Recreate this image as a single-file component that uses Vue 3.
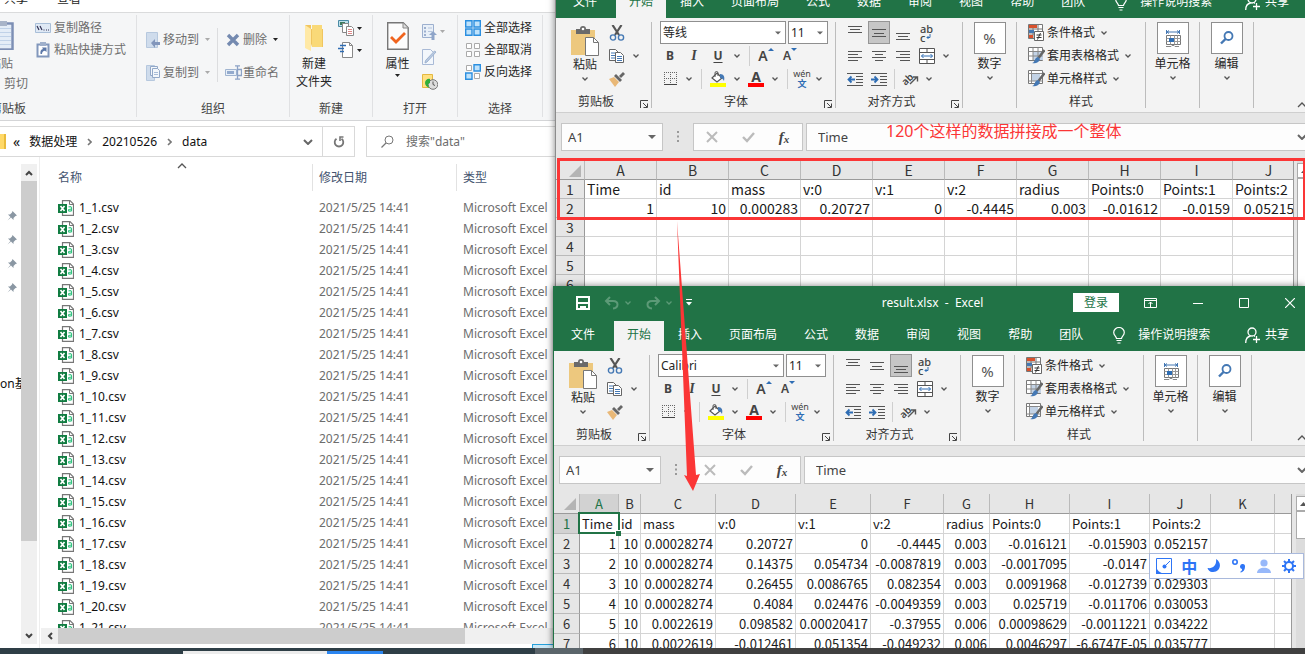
<script setup>
import { h } from 'vue'

// Icon artwork: [width, height, markup]
const art = {
  chev: [6, 4, '<path d="M.5.5 3 3 5.5.5" fill="none" stroke="#555" stroke-width="1.3"/>'],
  chevBig: [10, 6, '<path d="M1 1 5 5 9 1" fill="none" stroke="#666" stroke-width="2"/>'],
  chevUp: [10, 6, '<path d="M1 5 5 1 9 5" fill="none" stroke="#555" stroke-width="1.3"/>'],
  scrollUp: [8, 6, '<path d="M1 5 4 2 7 5" fill="none" stroke="#444" stroke-width="2"/>'],
  scrollDown: [8, 6, '<path d="M1 1 4 4 7 1" fill="none" stroke="#444" stroke-width="2"/>'],
  scrollLeft: [6, 8, '<path d="M5 1 2 4 5 7" fill="none" stroke="#444" stroke-width="2"/>'],
  crumb: [5, 8, '<path d="M1 1 4 4 1 7" fill="none" stroke="#777" stroke-width="1.6"/>'],
  tri: [5, 3, '<path d="M0 0h5L2.500 3z" fill="#222"/>'],
  triOff: [5, 3, '<path d="M0 0h5L2.500 3z" fill="#aaa"/>'],
  triBig: [8, 4, '<path d="M0 0h8L4 4z" fill="#666"/>'],
  triUp: [7, 4, '<path d="M0 4h7L3.500 0z" fill="#555"/>'],
  launch: [8, 8, '<path d="M.5 8V.5H8M3 3l4 4M7.500 3.500v4h-4" fill="none" stroke="#444"/>'],
  paste: [30, 30, '<path d="M1 4h24v25H1z" fill="#edc87e"/><path d="M6 3h4a3 3 0 0 1 6 0h4v5H6z" fill="#6a6a6a"/><circle cx="13" cy="3" r="1.300" fill="#fff"/><path d="M15.500 11.500h8l5 5v13h-13z" fill="#fff" stroke="#777"/><path d="M23.500 11.500v5h5" fill="none" stroke="#777"/>'],
  cut: [16, 16, '<path d="M3.500 0 10 10M12.500 0 6 10" stroke="#555" stroke-width="2.200" fill="none"/><circle cx="4" cy="12.500" r="2.600" fill="none" stroke="#4478b4" stroke-width="1.400"/><circle cx="12" cy="12.500" r="2.600" fill="none" stroke="#4478b4" stroke-width="1.400"/>'],
  copy: [16, 16, '<path d="M.5 1.500h6l3 3v8h-9z" fill="#fff" stroke="#666"/><path d="M2 5h4M2 7.500h4M2 10h4" stroke="#4478b4"/><path d="M6.500 4.500h5l3 3v7h-8z" fill="#fff" stroke="#666"/><path d="M8 8.500h5M8 10.500h5M8 12.500h5" stroke="#4478b4"/>'],
  brush: [18, 16, '<path d="m1 8 5-2 5 5-4 5z" fill="#e9b877"/><path d="m6 5 2-2 6 6-2 2z" fill="#666"/><path d="m11 5 4-4 2 2-4 4z" fill="#666"/>'],
  border: [13, 13, '<path d="M0 .5h13M0 6.500h13M.5 0v13M6.500 0v13M12.500 0v13" stroke="#666" stroke-dasharray="1 1" fill="none"/><path d="M0 12.500h13" stroke="#444"/>'],
  fill: [18, 16, '<path d="m8 2 5 5-5 4-5-4z" fill="#fff" stroke="#555" stroke-width="1.200"/><path d="M6 6V2a1.500 1.500 0 0 1 3 0v3" fill="none" stroke="#555"/><path d="M11 3c4 0 5 3 4 7-1-2-2-3-4-3z" fill="#4478b4"/><path d="M1 12h16v4H1z" fill="#ffff00"/>'],
  l1: [16, 16, '<path d="M1 1.500h14M3 4.500h10M1 7.500h14" stroke="#555"/>'],
  l2: [16, 16, '<path d="M1 4.500h14M3 8.500h10M1 11.500h14" stroke="#555"/>'],
  l3: [16, 16, '<path d="M1 8.500h14M3 11.500h10M1 14.500h14" stroke="#555"/>'],
  al: [16, 16, '<path d="M1 3.500h14M1 6.500h10M1 9.500h14M1 12.500h10" stroke="#555"/>'],
  ac: [16, 16, '<path d="M1 3.500h14M4 6.500h8M1 9.500h14M4 12.500h8" stroke="#555"/>'],
  ar: [16, 16, '<path d="M1 3.500h14M5 6.500h10M1 9.500h14M5 12.500h10" stroke="#555"/>'],
  out: [16, 16, '<path d="M0 2.500h16M9 5.500h7M9 8.500h7M9 11.500h7M0 14.500h16" stroke="#555"/><path d="M8 8.500H2M4.500 5.500l-3 3 3 3" stroke="#2e6db4" stroke-width="1.800" fill="none"/>'],
  ind: [16, 16, '<path d="M0 2.500h16M9 5.500h7M9 8.500h7M9 11.500h7M0 14.500h16" stroke="#555"/><path d="M0 8.500h6M3.500 5.500l3 3-3 3" stroke="#2e6db4" stroke-width="1.800" fill="none"/>'],
  merge: [16, 16, '<path d="M.5.5h15v15H.5zM.5 4.500h15M.5 11.500h15M8 .5v4M8 11.500v4" fill="#fff" stroke="#555"/><path d="M2.500 8h11M4.500 6l-2 2 2 2M11.500 6l2 2-2 2" stroke="#2e6db4" fill="none"/>'],
  arrowNE: [10, 12, '<path d="m1 11 7-7M4 4h4.500v4.500" stroke="#555" stroke-width="1.400" fill="none"/>'],
  ret: [5, 6, '<path d="M4 0v3.500H1M2.500 2 1 3.500 2.500 5" stroke="#2e6db4" fill="none"/>'],
  cond: [17, 17, '<path d="M.5.5h14v14H.5zM.5 5h14M.5 10h14M5 .5v14M10 .5v14" fill="#fff" stroke="#777"/><path d="M1 1h8v3H1z" fill="#d9512c"/><path d="M1 6h5v3H1z" fill="#4478b4"/><path d="M1 11h4v3H1z" fill="#d9512c"/><path d="M6.500 7.500h9v9h-9z" fill="#fff" stroke="#666"/><path d="M8.500 11h5M8.500 13.500h5M12.500 9l-3 6.500" stroke="#333" fill="none"/>'],
  tbl: [17, 17, '<path d="M.5.5h14v13H.5z" fill="#fff" stroke="#777"/><path d="M5 4h10v9H5z" fill="#c3d3e6"/><path d="M.5 4.500h14M.5 9h14M5 .5v13M10 .5v13" stroke="#888" fill="none"/><path d="m16.500 3-6 8" stroke="#666" stroke-width="2.500"/><path d="M4 16c3 0 2-5 6-6l2 2c-1 4-5 5-8 4z" fill="#4478b4"/>'],
  sty: [17, 17, '<path d="M.5.5h14v13H.5z" fill="#fff" stroke="#777"/><path d="M3 3h9v8H3z" fill="#c3d3e6"/><path d="M.5 3.500h14M.5 11h14M3.500 .5v13" stroke="#888" fill="none"/><path d="m16.500 3-6 8" stroke="#666" stroke-width="2.500"/><path d="M4 16c3 0 2-5 6-6l2 2c-1 4-5 5-8 4z" fill="#4478b4"/>'],
  cells: [16, 17, '<path d="M1.500 0v4M14.500 0v4M2 2h12" stroke="#4478b4" fill="none"/><path d="m4 .5-2 1.500 2 1.500M12 .5l2 1.500-2 1.500" stroke="#4478b4" fill="none"/><path d="M1.500 5.500h14v9h-14z" fill="#fff" stroke="#777"/><path d="M1.500 8.500h14M1.500 11.500h14M5.500 5.500v9M9.500 5.500v9M12.500 5.500v9" stroke="#999" fill="none"/><path d="M4 8h5v4H4z" fill="#2e6db4"/><path d="M1 16.500h5l1-1h2l1 1h4" stroke="#888" fill="none"/>'],
  find: [14, 14, '<circle cx="8.500" cy="5" r="4" fill="none" stroke="#4478b4" stroke-width="1.800"/><path d="M5.500 8 1 12.500" stroke="#4478b4" stroke-width="2.400"/>'],
  no: [12, 12, '<path d="m1 1 10 10M11 1 1 11" stroke="#bbb" stroke-width="2"/>'],
  yes: [13, 12, '<path d="m1 6 4 4 7-8" fill="none" stroke="#bbb" stroke-width="2.400"/>'],
  dots: [2, 12, '<path d="M0 1h2M0 5.500h2M0 10h2" stroke="#999" stroke-width="2"/>'],
  corner: [12, 12, '<path d="M12 0v12H0z" fill="#b4b4b4"/>'],
  save: [14, 14, '<path d="M1 1h12v12H1z" fill="none" stroke="#fff" stroke-width="2"/><path d="M1 7h12" stroke="#fff" stroke-width="2"/><path d="M4 10h6v4H8v-2H6v2H4z" fill="#fff"/>'],
  undo: [16, 14, '<path d="M6 1 2 5l4 4M2 5h7c6 0 6 7 0 7.500" fill="none" stroke="#5c9a77" stroke-width="2"/>'],
  redo: [16, 14, '<path d="m10 1 4 4-4 4M14 5H7C1 5 1 12 7 12.500" fill="none" stroke="#5c9a77" stroke-width="2"/>'],
  chevDim: [6, 4, '<path d="M.5.5 3 3 5.500.5" fill="none" stroke="#5c9a77" stroke-width="1.300"/>'],
  custom: [6, 7, '<path d="M0 .500h6" stroke="#fff"/><path d="M0 3h6L3 6.500z" fill="#fff"/>'],
  display: [13, 10, '<path d="M.5.5h12v9H.5zM.5 2.500h12M6.500 9V4M4.500 6l2-2 2 2" stroke="#fff" fill="none"/>'],
  min: [10, 10, '<path d="M0 5.500h10" stroke="#fff"/>'],
  max: [10, 10, '<path d="M.5.5h9v9h-9z" stroke="#fff" fill="none"/>'],
  close: [10, 10, '<path d="m0 0 10 10M10 0 0 10" stroke="#fff" stroke-width="1.200"/>'],
  bulb: [12, 17, '<path d="M3.500 11.500C3.500 9.500.7 8.500.7 5.500a5.300 5 0 0 1 10.600 0c0 3-2.800 4-2.800 6zM3.500 13.500h5M4.500 16h3" stroke="#fff" stroke-width="1.200" fill="none"/>'],
  person: [15, 16, '<circle cx="7" cy="5" r="4" stroke="#fff" stroke-width="1.300" fill="none"/><path d="M.7 16c0-4 2-6.500 5-7M9 9h1M11.500 9v7M8 12.500h7" stroke="#fff" stroke-width="1.300" fill="none"/>'],
  // File manager
  xPaste: [26, 30, '<path d="M1.500 3.500h23v26h-23z" fill="#fff" stroke="#7c8fb5" stroke-width="2.500"/><path d="M3 5h20v23H3z" fill="#e4edf7"/><path d="M3 8.500h20M3 12.500h20M3 16.500h20M3 20.500h20M3 24.500h20" stroke="#c0d2e8"/><path d="M7 1h12v5H7z" fill="#a8b4c8"/>'],
  xPath: [16, 10, '<path d="M.5.5h15v9H.5z" fill="#dfe9f5" stroke="#a9bfd8"/><path d="m2 3 2 4M5 3l2 4M8.500 7h1M11 7h1M13 7h1" stroke="#335" stroke-width="1.200"/>'],
  xShort: [14, 16, '<path d="M1.500 2.500h11v12h-11z" fill="#fff" stroke="#8297bc" stroke-width="2"/><path d="M4 0h6v4H4z" fill="#9fb0cb"/><path d="M4.500 12c-.5-3 .5-4.500 2.500-5L6 5.500h4.500V10L9 8.700C7 9 6 10 6 12z" fill="#5c78a8"/>'],
  xMove: [15, 16, '<path d="M.5.5h11v15H.5z" fill="#cfdcec" stroke="#b6c8de"/><path d="m5 11 4-4v3h5v3H9v3z" fill="#8296bb"/>'],
  xCopy: [15, 16, '<path d="M.5.5h8v15h-8z" fill="#cfdcec" stroke="#b6c8de"/><path d="M4.500 1.500h7v9h-7z" fill="#f3f7fb" stroke="#92a8c8"/><path d="M6.500 3.500h5l2 2v7h-7z" fill="#f3f7fb" stroke="#92a8c8"/><path d="M8 7.500h4M8 9.500h4" stroke="#a8bcd8"/>'],
  xDel: [14, 14, '<path d="m2 2 10 10M12 2 2 12" stroke="#748ab0" stroke-width="3.400"/>'],
  xRen: [17, 15, '<path d="M.5 4.500h11v6H.5z" fill="#e8f0f8" stroke="#a0b4d0"/><path d="M2 6h7v3H2z" fill="#93aacd"/><path d="M10 .8h5M12.500 1v13M10 14.200h5M12.500 4.500h4v6h-4" stroke="#8ca2c6" fill="none" stroke-width="1.300"/>'],
  xFolder: [20, 28, '<path d="M1 1h6v4h12v18H8z" fill="#f0c55f"/><path d="M8 1h10v22H8z" fill="#f9d978"/><path d="m1 1 6 4v22l-6-3z" fill="#ffe9a6"/>'],
  xNew1: [16, 16, '<path d="M.5.5h10v6H.5z" fill="#bfe0ea" stroke="#4a8ba5"/><path d="M2 2h5v3H2z" fill="#3d7a5e"/><path d="M4.500 3.500h6v9h-6z" fill="#fff" stroke="#888"/><path d="M8.500 6.500h5l2 2v7h-7z" fill="#fff" stroke="#888"/><path d="M10 9.500h4M10 11.500h4M10 13.500h4" stroke="#d88"/>'],
  xNew2: [16, 16, '<path d="M4.500.5h7l3 3v12h-10z" fill="#fff" stroke="#888"/><path d="M11.500.5v3h3" fill="none" stroke="#888"/><path d="M2 3.500h6M0 6.500h6M2 9.500h4" stroke="#2f6db5" stroke-width="1.600"/>'],
  xProp: [22, 28, '<path d="M.7.700h15.500l5 5v21.500H.7z" fill="#fcfcfc" stroke="#777" stroke-width="1.400"/><path d="M16 1v5h5" fill="#ddd" stroke="#888"/><path d="m4 15 5 5 9-9" fill="none" stroke="#f0641e" stroke-width="2.800"/>'],
  xOpen: [15, 16, '<path d="M.5.500h11v13H.5z" fill="#e9f0f8" stroke="#9db0cf"/><path d="M2 3h2v2H2zM2 6.500h2v2H2zM2 10h2v2H2z" fill="#9db0cf"/><path d="M6 4h4M6 7.500h4" stroke="#b5c4dc"/><path d="m11 7 4 4h-2.500v5h-3v-5H7z" fill="#8fa5c9"/>'],
  xEdit: [15, 16, '<path d="M.5.500h8l3 3v12H.5z" fill="#f3f7fc" stroke="#a9bad6"/><path d="M14 3 5 13l-2 1 .500-2.500L12.500 2z" fill="#b9cae2" stroke="#a0b4d0"/>'],
  xHist: [16, 16, '<path d="M.5.500h10v13H.5z" fill="#ffe081" stroke="#e4b840"/><circle cx="11" cy="10.500" r="4.800" fill="#ddd" stroke="#777"/><path d="M11 7.500v3l2 1" stroke="#555" fill="none"/><path d="M3 9c0-3 3-5 5-4v4l-2 1 1 4c-2-1-4-3-4-5z" fill="#2fae3c"/>'],
  xAll: [16, 16, '<path d="M.7.700h6.300v6.300H.7zM9 .7h6.300v6.300H9zM.7 9h6.300v6.300H.7zM9 9h6.300v6.300H9z" fill="#bfe2fb" stroke="#2b8fe0" stroke-width="1.400"/>'],
  xNone: [16, 16, '<path d="M1.500 1.500h5v5h-5zM9.500 1.500h5v5h-5zM1.500 9.500h5v5h-5zM9.500 9.500h5v5h-5z" fill="#fff" stroke="#aaa"/>'],
  xInv: [16, 16, '<path d="M1.500 1.500h5v5h-5zM9.500 9.500h5v5h-5z" fill="#fff" stroke="#aaa"/><path d="M9 .7h6.300v6.300H9zM.7 9h6.300v6.300H.7z" fill="#bfe2fb" stroke="#2b8fe0" stroke-width="1.400"/>'],
  refresh: [12, 12, '<path d="M8.500 2.700A4.300 4.300 0 1 1 3.500 2.700" fill="none" stroke="#777" stroke-width="1.800"/><path d="M10.500 1H7v4" fill="none" stroke="#777" stroke-width="1.600"/>'],
  search: [13, 13, '<circle cx="8" cy="5" r="4" fill="none" stroke="#777"/><path d="M5 8 .5 12.500" stroke="#777" stroke-width="1.300"/>'],
  pin: [10, 10, '<path d="M5.500 0 10 4.500 8.500 5l-2 2v2L4 6.500.5 9.500l3-3.500L1 3.500h2l2-2z" fill="#8a97a3"/>'],
  csv: [16, 16, '<path d="M4.500.600h7.500l3.500 3.500v11.300h-11z" fill="#fff" stroke="#777" stroke-width="1.200"/><path d="M11.500.500v4h4" fill="none" stroke="#777"/><path d="M0 4h9v9H0z" fill="#107c41"/><path d="m2.500 6 4 5M6.500 6l-4 5" stroke="#fff" stroke-width="1.700"/><path d="M10.500 7c2-.8 3-.3 3 1v3.300M13.500 9c-2 0-3 .300-3 1.200 0 1.300 2.500 1.300 3 0" fill="none" stroke="#33c481" stroke-width="1.200"/>'],
  // Input method bar
  imeLogo: [16, 16, '<path d="M.5.500h15v15H.5z" fill="#fff" stroke="#2e75f6"/><path d="M0 9c2 5 5 6 10 7H0z" fill="#2e75f6"/><path d="m14 3-5 5" stroke="#2e75f6"/><circle cx="8.500" cy="8.500" r="2" fill="#2e75f6"/>'],
  imeMoon: [14, 14, '<path d="M9 0c7 4 4 14-4 13-2 0-4-2-4.500-4C6 10 10 6 9 0z" fill="#2e75f6"/>'],
  imePunct: [13, 14, '<circle cx="3" cy="3" r="2.200" fill="none" stroke="#2e75f6" stroke-width="1.600"/><path d="M8 13c2-1 2-2 2-3a2.500 2.500 0 1 1 3-2c0 3-2 5-4 5.500z" fill="#2e75f6"/>'],
  imeUser: [14, 14, '<circle cx="7" cy="4" r="3.600" fill="#97b8fa"/><path d="M0 14c0-7 14-7 14 0z" fill="#97b8fa"/>'],
  imeGear: [14, 14, '<path d="M7 0v14M0 7h14M2 2l10 10M12 2 2 12" stroke="#2e75f6" stroke-width="2"/><circle cx="7" cy="7" r="4" fill="#fff" stroke="#2e75f6" stroke-width="2"/>'],
}
const Icon = ({ n }) => {
  const [w, ht, html] = art[n]
  return h('svg', { width: w, height: ht, viewBox: `0 0 ${w} ${ht}`, class: 'ic', 'aria-hidden': 'true', innerHTML: html })
}
Icon.props = ['n']

const tabs = ['文件', '开始', '插入', '页面布局', '公式', '数据', '审阅', '视图', '帮助', '团队']
const names = ['Time', 'id', 'mass', 'v:0', 'v:1', 'v:2', 'radius', 'Points:0', 'Points:1', 'Points:2']
const letters = 'ABCDEFGHIJKL'

const books = [
  {
    id: 'source', title: 'data  -  Excel', font: '等线', align: 1, selected: false,
    rowHead: 29, widths: Array(12).fill(72),
    rows: [names, ['1', '10', '0.000283', '0.20727', '0', '-0.4445', '0.003', '-0.01612', '-0.0159', '0.052157'], [], [], [], []],
  },
  {
    id: 'result', title: 'result.xlsx  -  Excel', font: 'Calibri', align: 2, selected: true,
    rowHead: 26, widths: [39, 22, 75, 80, 75, 73, 46, 80, 80, 61, 64, 64],
    rows: [
      names,
      ['1', '10', '0.00028274', '0.20727', '0', '-0.4445', '0.003', '-0.016121', '-0.015903', '0.052157'],
      ['2', '10', '0.00028274', '0.14375', '0.054734', '-0.0087819', '0.003', '-0.0017095', '-0.0147', ''],
      ['3', '10', '0.00028274', '0.26455', '0.0086765', '0.082354', '0.003', '0.0091968', '-0.012739', '0.029303'],
      ['4', '10', '0.00028274', '0.4084', '0.024476', '-0.0049359', '0.003', '0.025719', '-0.011706', '0.030053'],
      ['5', '10', '0.0022619', '0.098582', '0.00020417', '-0.37955', '0.006', '0.00098629', '-0.0011221', '0.034222'],
      ['6', '10', '0.0022619', '-0.012461', '0.051354', '-0.049232', '0.006', '0.0046297', '-6.6747E-05', '0.035777'],
    ],
  },
]
const total = (b) => b.rowHead + b.widths.reduce((a, c) => a + c, 0)
const files = Array.from({ length: 21 }, (_, i) => `1_${i + 1}.csv`)
</script>

<template>
  <main class="desktop">
    <section class="explorer" aria-label="data">
      <nav class="x-tabs"><a href="#">共享</a><a href="#">查看</a></nav>
      <div class="x-ribbon">
        <div class="x-group g-clip">
          <div class="x-body">
            <div class="x-pastecol">
              <button class="x-big off"><Icon n="xPaste" /><span>粘贴</span></button>
              <button class="x-cut off">剪切</button>
            </div>
            <div class="x-rows">
              <button class="off"><Icon n="xPath" />复制路径</button>
              <button class="off"><span class="slot"><Icon n="xShort" /></span>粘贴快捷方式</button>
            </div>
          </div>
          <div class="x-label">剪贴板</div>
        </div>
        <div class="x-group g-org">
          <div class="x-body">
            <div class="x-rows tall">
              <button class="off"><Icon n="xMove" />移动到<span class="x-arrow"><Icon n="triOff" /></span></button>
              <button class="off"><Icon n="xCopy" />复制到<span class="x-arrow"><Icon n="triOff" /></span></button>
            </div>
            <i class="x-sep"></i>
            <div class="x-rows tall">
              <button class="off"><span class="slot"><Icon n="xDel" /></span>删除<span class="x-arrow"><Icon n="tri" /></span></button>
              <button class="off"><span class="slot"><Icon n="xRen" /></span>重命名</button>
            </div>
          </div>
          <div class="x-label">组织</div>
        </div>
        <div class="x-group g-new">
          <div class="x-body">
            <button class="x-big folder"><Icon n="xFolder" /><span>新建<br />文件夹</span></button>
            <div class="x-rows">
              <button aria-label="新建项目"><Icon n="xNew1" /><Icon n="tri" /></button>
              <button aria-label="轻松访问"><Icon n="xNew2" /><Icon n="tri" /></button>
            </div>
          </div>
          <div class="x-label">新建</div>
        </div>
        <div class="x-group g-open">
          <div class="x-body">
            <button class="x-big"><Icon n="xProp" /><span>属性</span><Icon n="tri" /></button>
            <div class="x-rows mid">
              <button aria-label="打开"><Icon n="xOpen" /><Icon n="triOff" /></button>
              <button aria-label="编辑"><Icon n="xEdit" /></button>
              <button aria-label="历史记录"><Icon n="xHist" /></button>
            </div>
          </div>
          <div class="x-label">打开</div>
        </div>
        <div class="x-group g-sel">
          <div class="x-body">
            <div class="x-rows">
              <button><Icon n="xAll" />全部选择</button>
              <button><Icon n="xNone" />全部取消</button>
              <button><Icon n="xInv" />反向选择</button>
            </div>
          </div>
          <div class="x-label">选择</div>
        </div>
      </div>
      <div class="x-address">
        <div class="x-path">
          <i class="x-folder"></i>
          <span class="x-more">«</span>
          <a href="#">数据处理</a><Icon n="crumb" />
          <a href="#">20210526</a><Icon n="crumb" />
          <a href="#">data</a>
          <button class="x-drop" aria-label="历史位置"><Icon n="chevBig" /></button>
        </div>
        <button class="x-refresh" aria-label="刷新"><Icon n="refresh" /></button>
        <label class="x-search"><Icon n="search" /><input type="text" placeholder='搜索"data"' aria-label="搜索" /></label>
      </div>
      <div class="x-main">
        <aside class="x-nav">
          <button v-for="p in 4" :key="p" aria-label="固定"><Icon n="pin" /></button>
          <span>on基</span>
        </aside>
        <div class="v-scroll">
          <button aria-label="向上"><Icon n="scrollUp" /></button>
          <i></i>
          <button aria-label="向下"><Icon n="scrollDown" /></button>
        </div>
        <div class="x-content">
          <div class="x-list">
            <table>
              <colgroup><col class="c-name" /><col class="c-date" /><col class="c-type" /></colgroup>
              <thead><tr><th>名称<span class="sort"><Icon n="chevUp" /></span></th><th>修改日期</th><th>类型</th></tr></thead>
              <tbody>
                <tr v-for="f in files" :key="f">
                  <td><span class="file"><Icon n="csv" />{{ f }}</span></td>
                  <td class="dim">2021/5/25 14:41</td>
                  <td class="dim">Microsoft Excel</td>
                </tr>
              </tbody>
            </table>
          </div>
          <div class="h-scroll"><button aria-label="向左"><Icon n="scrollLeft" /></button><i></i></div>
          <div class="x-status"><i></i></div>
        </div>
      </div>
    </section>

    <section v-for="b in books" :key="b.id" class="excel" :class="b.id" :aria-label="b.title">
      <header class="title">
        <div class="quick">
          <button aria-label="保存"><Icon n="save" /></button>
          <button aria-label="撤消"><Icon n="undo" /><Icon n="chevDim" /></button>
          <button aria-label="恢复"><Icon n="redo" /><Icon n="chevDim" /></button>
          <button aria-label="自定义"><Icon n="custom" /></button>
        </div>
        <h1>{{ b.title }}</h1>
        <div class="winbtns">
          <button class="login">登录</button>
          <button aria-label="功能区"><Icon n="display" /></button>
          <button aria-label="最小化"><Icon n="min" /></button>
          <button aria-label="最大化"><Icon n="max" /></button>
          <button aria-label="关闭"><Icon n="close" /></button>
        </div>
      </header>
      <nav class="tabs">
        <button v-for="(t, i) in tabs" :key="t" :class="{ file: i === 0, on: i === 1 }">{{ t }}</button>
        <button class="tell"><Icon n="bulb" />操作说明搜索</button>
        <button class="share"><Icon n="person" />共享</button>
      </nav>
      <div class="ribbon">
        <div class="group clip">
          <div class="body">
            <button class="paste"><Icon n="paste" /><span>粘贴</span><Icon n="chev" /></button>
            <div class="rows">
              <div class="row"><button class="b" aria-label="剪切"><Icon n="cut" /></button></div>
              <div class="row"><button class="b" aria-label="复制"><Icon n="copy" /></button><button class="d" aria-label="复制选项"><Icon n="chev" /></button></div>
              <div class="row"><button class="b" aria-label="格式刷"><Icon n="brush" /></button></div>
            </div>
          </div>
          <div class="label"><span>剪贴板</span><button aria-label="剪贴板设置"><Icon n="launch" /></button></div>
        </div>
        <div class="group font">
          <div class="rows">
            <div class="row combos">
              <span class="combo face"><select aria-label="字体"><option>{{ b.font }}</option></select><Icon n="triBig" /></span>
              <span class="combo size"><select aria-label="字号"><option>11</option></select><Icon n="triBig" /></span>
            </div>
            <div class="row">
              <button class="b"><b>B</b></button><button class="b it"><b>I</b></button><button class="b un"><b>U</b></button>
              <button class="d" aria-label="下划线选项"><Icon n="chev" /></button><i class="s"></i>
              <button class="b grow">A<i class="up"></i></button><button class="b shrink">A<i class="down"></i></button>
            </div>
            <div class="row">
              <button class="b" aria-label="边框"><Icon n="border" /></button><button class="d" aria-label="边框选项"><Icon n="chev" /></button><i class="s"></i>
              <button class="b" aria-label="填充颜色"><Icon n="fill" /></button><button class="d" aria-label="填充选项"><Icon n="chev" /></button>
              <button class="b color"><b>A</b></button><button class="d" aria-label="颜色选项"><Icon n="chev" /></button><i class="s"></i>
              <button class="b wen"><span>wén</span><span>文</span></button><button class="d" aria-label="拼音选项"><Icon n="chev" /></button>
            </div>
          </div>
          <div class="label"><span>字体</span><button aria-label="字体设置"><Icon n="launch" /></button></div>
        </div>
        <div class="group align">
          <div class="rows">
            <div class="row">
              <button v-for="(k, i) in ['l1', 'l2', 'l3']" :key="k" class="b" :class="{ pressed: b.align === i }" aria-label="垂直对齐"><Icon :n="k" /></button>
              <button class="b wrap"><span>ab</span><span>c<Icon n="ret" /></span></button>
            </div>
            <div class="row">
              <button v-for="k in ['al', 'ac', 'ar', 'merge']" :key="k" class="b" aria-label="水平对齐"><Icon :n="k" /></button>
              <button class="d" aria-label="合并选项"><Icon n="chev" /></button>
            </div>
            <div class="row">
              <button class="b" aria-label="减少缩进"><Icon n="out" /></button><button class="b" aria-label="增加缩进"><Icon n="ind" /></button><i class="s tight"></i>
              <button class="b orient"><span>ab</span><Icon n="arrowNE" /></button><button class="d" aria-label="方向选项"><Icon n="chev" /></button>
            </div>
          </div>
          <div class="label"><span>对齐方式</span><button aria-label="对齐设置"><Icon n="launch" /></button></div>
        </div>
        <div class="group one"><button class="tile"><span class="box">%</span><span>数字</span><Icon n="chev" /></button></div>
        <div class="group styles">
          <div class="rows">
            <div class="row"><button class="w"><Icon n="cond" />条件格式<Icon n="chev" /></button></div>
            <div class="row"><button class="w"><Icon n="tbl" />套用表格格式<Icon n="chev" /></button></div>
            <div class="row"><button class="w"><Icon n="sty" />单元格样式<Icon n="chev" /></button></div>
          </div>
          <div class="label"><span>样式</span></div>
        </div>
        <div class="group one"><button class="tile"><span class="box"><Icon n="cells" /></span><span>单元格</span><Icon n="chev" /></button></div>
        <div class="group one"><button class="tile"><span class="box"><Icon n="find" /></span><span>编辑</span><Icon n="chev" /></button></div>
        <button class="collapse" aria-label="折叠功能区"><Icon n="chevUp" /></button>
      </div>
      <div class="formula">
        <label class="namebox"><input type="text" value="A1" aria-label="名称框" /><Icon n="triBig" /></label>
        <span class="grip"><Icon n="dots" /></span>
        <div class="fx"><button aria-label="取消"><Icon n="no" /></button><button aria-label="输入"><Icon n="yes" /></button><button><em>f</em><small>x</small></button></div>
        <label class="entry"><input type="text" value="Time" aria-label="编辑栏" /><Icon n="chevBig" /></label>
      </div>
      <div class="sheet">
        <div class="cells">
          <table :style="{ width: total(b) + 'px' }">
            <colgroup><col :style="{ width: b.rowHead + 'px' }" /><col v-for="(w, i) in b.widths" :key="i" :style="{ width: w + 'px' }" /></colgroup>
            <thead>
              <tr>
                <th class="corner"><Icon n="corner" /></th>
                <th v-for="(w, i) in b.widths" :key="i" :class="{ sel: b.selected && i === 0 }">{{ letters[i] }}</th>
              </tr>
            </thead>
            <tbody>
              <tr v-for="(r, ri) in b.rows" :key="ri">
                <th :class="{ sel: b.selected && ri === 0 }">{{ ri + 1 }}</th>
                <td v-for="(w, i) in b.widths" :key="i" :class="{ num: ri > 0, active: b.selected && ri === 0 && i === 0 }">{{ r[i] }}</td>
              </tr>
            </tbody>
          </table>
        </div>
        <div class="bar"><button aria-label="向上滚动"><Icon n="triUp" /></button><i></i></div>
      </div>
    </section>

    <div class="mark-box"></div>
    <p class="mark-text">120个这样的数据拼接成一个整体</p>
    <svg class="mark-arrow" width="24" height="270" viewBox="0 0 24 270" aria-hidden="true"><path d="M1 0 11 255 8 254 17 270 24 253 20 254z" fill="#fb3636" /></svg>

    <div class="ime">
      <button aria-label="输入法"><Icon n="imeLogo" /></button>
      <button class="zh">中</button>
      <button aria-label="半角"><Icon n="imeMoon" /></button>
      <button aria-label="标点"><Icon n="imePunct" /></button>
      <button aria-label="用户"><Icon n="imeUser" /></button>
      <button aria-label="设置"><Icon n="imeGear" /></button>
    </div>

    <footer class="taskbar"><i class="t-light"></i><i class="t-blue"></i><i class="t-gap"></i><i class="t-grey"></i><i class="t-dark"></i></footer>
  </main>
</template>

<style>
html, body { margin: 0; overflow: hidden; }
</style>

<style scoped>
* { box-sizing: border-box; }
.desktop { position: relative; height: 100vh; overflow: hidden; background: #fff; font: 12px/16px "Noto Sans", "Noto Sans CJK SC", sans-serif; color: #262626; }
button { border: 0; padding: 0; margin: 0; background: none; font: inherit; color: inherit; white-space: nowrap; display: flex; align-items: center; justify-content: center; }
input, select { border: 0; padding: 0; background: none; font: inherit; color: inherit; outline: 0; min-width: 0; appearance: none; }
a { color: inherit; text-decoration: none; }
table { border-collapse: separate; border-spacing: 0; table-layout: fixed; }
th { font-weight: 400; }
.ic { display: block; flex: none; }

/* File manager window */
.explorer { position: absolute; left: -20px; top: 0; bottom: 6px; width: 575px; display: flex; flex-direction: column; background: #fff; overflow: hidden; }
.x-tabs { height: 13px; flex: none; display: flex; align-items: flex-end; gap: 29px; padding: 0 0 5px 24px; border-bottom: 1px solid #dadbdc; }
.x-ribbon { flex: none; display: flex; height: 108px; padding: 2px 0 3px; background: #f5f6f7; border-bottom: 1px solid #d4d5d7; }
.x-group { display: flex; flex-direction: column; border-right: 1px solid #e0e1e3; }
.g-clip { width: 157px; }
.g-org { width: 153px; }
.g-new { width: 83px; }
.g-open { width: 85px; }
.g-sel { width: 85px; }
.x-body { display: flex; flex: 1; }
.x-label { text-align: center; line-height: 16px; color: #444; }
.g-clip .x-label { text-align: left; padding-left: 10px; }
.off { color: #6e6e6e; }
.x-big { flex-direction: column; justify-content: flex-start; width: 42px; padding-top: 5px; gap: 5px; line-height: 18px; }
.x-big.folder { width: 48px; padding-top: 9px; gap: 3px; }
.g-open .x-big { width: 49px; padding-top: 7px; }
.g-open .x-big .ic + span { margin-bottom: -4px; }
.x-pastecol { width: 55px; }
.x-cut { margin: 3px 0 0 24px; }
.x-rows { padding-top: 2px; display: flex; flex-direction: column; }
.x-rows button { height: 22px; gap: 3px; justify-content: flex-start; }
.x-rows.tall { padding-top: 8px; }
.x-rows.tall button { height: 33px; gap: 2px; }
.x-rows.mid { padding-top: 4px; }
.x-rows.mid button { height: 25px; }
.g-org .x-body { padding-left: 9px; }
.g-sel .x-body { padding-left: 7px; }
.slot { width: 16px; display: flex; justify-content: center; }
.x-arrow { width: 12px; display: flex; justify-content: center; }
.x-sep { width: 1px; height: 54px; margin: 13px 7px 0 4px; background: #dcdddf; }
.x-address { flex: none; display: flex; height: 36px; padding-top: 5px; }
.x-path { flex: none; width: 343px; height: 31px; display: flex; align-items: center; gap: 10px; border: 1px solid #d9d9d9; padding-left: 17px; color: #111; }
.x-folder { width: 8px; height: 15px; margin-right: -3px; background: #ffd968; border-right: 2px solid #e9bb3c; }
.x-more { font-size: 14px; margin-right: -1px; }
.x-drop { margin-left: auto; width: 29px; height: 29px; }
.x-refresh { flex: none; width: 32px; height: 31px; border: 1px solid #d9d9d9; border-left: 0; }
.x-search { flex: 1; min-width: 0; height: 31px; margin-left: 11px; padding-left: 14px; display: flex; align-items: center; gap: 12px; border: 1px solid #d9d9d9; border-right: 0; }
.x-search input { flex: 1; }
.x-search input::placeholder { color: #6d6d6d; opacity: 1; }
.x-main { flex: 1; min-height: 0; display: flex; }
.x-nav { width: 41px; padding: 47px 0 0; overflow: hidden; display: flex; flex-direction: column; }
.x-nav button { height: 24px; width: 24px; margin-left: 20px; flex: none; }
.x-nav span { margin: 72px 0 0 20px; line-height: 24px; white-space: nowrap; color: #111; }
.v-scroll { width: 16px; margin: 7px 0 4px; display: flex; flex-direction: column; background: #f0f0f0; }
.v-scroll button { height: 17px; flex: none; }
.v-scroll i { height: 360px; background: #cdcdcd; }
.v-scroll button:last-child { margin-top: auto; }
.x-content { flex: 1; min-width: 0; margin-left: 2px; border-left: 1px solid #eee; display: flex; flex-direction: column; }
.x-list { flex: 1; min-height: 0; overflow: hidden; }
.x-list table { width: 100%; }
.c-name { width: 273px; }
.c-date { width: 144px; }
.x-list th { position: relative; height: 40px; padding: 1px 0 0 6px; text-align: left; color: #44546f; background: linear-gradient(#e2e2e2, #e2e2e2) right 7px / 1px 27px no-repeat; }
.x-list th:first-child, .x-list td:first-child { padding-left: 18px; }
.x-list th:last-child { background: none; }
.sort { position: absolute; left: 137px; top: 6px; }
.x-list td { height: 21px; padding: 0 0 0 6px; line-height: 20px; white-space: nowrap; overflow: hidden; color: #111; }
.x-list td.dim { color: #6d6d6d; }
.file { display: flex; align-items: center; gap: 5px; }
.h-scroll { flex: none; height: 16px; display: flex; background: #f0f0f0; margin-left: 1px; }
.h-scroll button { width: 17px; }
.h-scroll i { width: 407px; background: #cdcdcd; }
.x-status { flex: none; height: 4px; display: flex; justify-content: flex-end; }
.x-status i { width: 23px; border: 1px solid #26a0da; border-bottom: 0; background: #cbe8f6; }

/* Spreadsheet windows */
.excel { position: absolute; right: 0; bottom: 6px; display: flex; flex-direction: column; background: #e6e6e6; box-shadow: 0 0 7px rgba(0, 0, 0, .5); overflow: hidden; }
.source { left: 555px; top: -47px; border-left: 1px solid #8c8c8c; }
.result { left: 553px; top: 286px; border-left: 1px solid #217346; }
.title { flex: none; height: 35px; padding-bottom: 2px; display: flex; align-items: center; justify-content: space-between; background: #217346; color: #fff; }
.title h1 { margin: 0 0 0 100px; font-size: 12px; font-weight: 400; line-height: 16px; white-space: pre; }
.quick { display: flex; align-items: center; gap: 14px; padding-left: 22px; }
.quick button { gap: 5px; }
.winbtns { display: flex; align-items: center; gap: 36px; padding-right: 10px; }
.login { width: 46px; height: 19px; margin-right: -11px; background: #fff; color: #217346; }
.tabs { flex: none; height: 30px; display: flex; gap: 1px; padding-left: 4px; background: #217346; color: #fff; }
.tabs button { padding: 0 13px 2px; }
.tabs .file { margin-right: 5px; }
.tabs .on { background: #f3f3f3; color: #217346; }
.tabs .tell { gap: 13px; padding-left: 16px; }
.tabs .share { margin-left: auto; gap: 5px; padding-right: 16px; }
.ribbon { flex: none; height: 95px; display: flex; background: #f3f3f3; border-bottom: 1px solid #cfcfcf; }
.group { padding-top: 3px; background: linear-gradient(#bcbcbc, #bcbcbc) right 4px / 1px 86px no-repeat; flex: none; }
.clip { width: 96px; }
.font { width: 184px; }
.align { width: 127px; }
.one { width: 54px; }
.styles { width: 129px; }
.body { display: flex; height: 69px; }
.row { display: flex; align-items: center; height: 23px; }
.b { width: 24px; height: 23px; flex: none; color: #444; }
.d { width: 14px; height: 23px; flex: none; }
.s { width: 10px; height: 20px; flex: none; background: linear-gradient(#cfcfcf, #cfcfcf) center / 1px 100% no-repeat; }
.s.tight { width: 7px; }
.label { display: flex; margin-top: 4px; height: 16px; color: #333; }
.label span { flex: 1; text-align: center; }
.label button { width: 16px; padding: 3px 0 0; }
.paste { width: 40px; margin-left: 9px; padding-top: 5px; flex-direction: column; justify-content: flex-start; line-height: 18px; }
.paste > .ic:last-child { margin-top: 3px; }
.font .rows { padding-left: 6px; }
.align .rows { padding-left: 7px; }
.styles .rows { padding-left: 11px; }
.styles .label { padding-right: 1px; }
.combos { gap: 2px; padding-left: 2px; }
.combo { height: 23px; display: flex; align-items: center; background: #fff; border: 1px solid #8f8f8f; padding: 0 4px 0 2px; font: 12px/20px "Noto Sans", "Noto Sans CJK SC", sans-serif; }
.combo select { flex: 1; }
.face { width: 126px; }
.size { width: 40px; }
.combo .ic { width: 6px; }
.it { font-family: "Liberation Serif", serif; font-style: italic; font-size: 14px; }
.un { text-decoration: underline; text-underline-offset: 2px; }
.grow { font-size: 14px; font-weight: 600; }
.shrink { font-size: 12px; font-weight: 600; }
.up, .down { align-self: flex-start; margin-top: 4px; border: 3px solid transparent; border-top-width: 0; border-bottom-color: #2e6db4; }
.down { border-width: 3px 3px 0; border-color: #2e6db4 transparent transparent; }
.color b { width: 16px; height: 16px; line-height: 12px; font-size: 14px; border-bottom: 4px solid #f00; }
.wen { width: 20px; flex-direction: column; font-size: 9px; line-height: 10px; }
.wen span:last-child { color: #2e6db4; font-weight: 700; line-height: 10px; }
.wrap { flex-direction: column; line-height: 9px; font-weight: 500; font-size: 11px; }
.wrap span { width: 14px; display: flex; align-items: center; gap: 1px; }
.pressed { width: 22px; margin: 0 1px; background: #c6c6c6; border: 1px solid #959595; }
.orient { font-size: 10px; font-weight: 600; }
.orient span { transform: rotate(-45deg); }
.orient .ic { margin-left: -5px; }
.tile { width: 53px; padding-top: 1px; flex-direction: column; }
.box { width: 32px; height: 32px; display: flex; align-items: center; justify-content: center; background: #fff; border: 1px solid #8f8f8f; font-size: 15px; color: #555; }
.tile > span:nth-child(2) { margin-top: 2px; }
.tile > .ic { margin-top: 4px; }
.w { gap: 2px; height: 23px; }
.w .ic:last-child { margin-left: 4px; }
.collapse { margin: auto -2px 4px auto; }
.formula { flex: none; display: flex; padding: 10px 0; height: 48px; font-size: 13px; color: #444; }
.formula label, .fx { height: 28px; display: flex; align-items: center; background: #fdfdfd; border: 1px solid #c6c6c6; }
.namebox { width: 102px; margin-left: 5px; padding: 0 6px; }
.namebox input { flex: 1; }
.grip { width: 30px; display: flex; align-items: center; justify-content: center; }
.fx { width: 110px; justify-content: space-around; }
.fx button { width: 24px; }
.fx em { font: italic 700 15px/20px "Liberation Serif", serif; }
.fx small { font: italic 700 11px/20px "Liberation Serif", serif; padding-top: 3px; }
.formula .entry { flex: 1; margin-left: 3px; padding-left: 11px; border-right: 0; }
.entry input { flex: 1; }
.entry .ic { margin-right: -2px; }
.sheet { flex: 1; min-height: 0; display: flex; font-family: "Noto Sans CJK SC", sans-serif; }
.cells { flex: 1; min-width: 0; overflow: hidden; border-right: 1px solid #9a9a9a; background: #fff; }
.cells td, .cells th { padding: 0; overflow: hidden; white-space: nowrap; border-right: 1px solid #d4d4d4; border-bottom: 1px solid #d4d4d4; color: #1a1a1a; }
.cells th { background: #e6e6e6; border-right-color: #bababa; border-bottom-color: #bababa; text-align: center; color: #333; }
.cells thead th { border-bottom-color: #9a9a9a; }
.cells tbody th { border-right-color: #9a9a9a; }
.cells td { padding: 0 2px; }
.cells td.num { text-align: right; }
.source .cells { font-size: 14px; line-height: 18px; }
.source .cells th, .source .cells td { height: 19px; }
.result .cells { font-size: 13px; line-height: 19px; }
.result .cells th, .result .cells td { height: 20px; }
.corner .ic { margin: 1px 3px 0 auto; }
.cells .sel { background: #d2d2d2; color: #217346; }
.cells td.active { position: relative; overflow: visible; }
.active::before { content: ""; position: absolute; inset: -2px -2px -1px -2px; border: 2px solid #217346; }
.active::after { content: ""; position: absolute; right: -3px; bottom: -3px; width: 5px; height: 5px; background: #217346; border: solid #fff; border-width: 1px 0 0 1px; }
.bar { width: 8px; margin-left: 3px; padding-top: 2px; overflow: hidden; background: #dcdcdc; }
.result .bar { width: 9px; margin-left: 4px; }
.bar button { width: 17px; height: 15px; background: #fff; border: 1px solid #ababab; padding-right: 2px; }
.bar i { display: block; width: 17px; height: 28px; background: #fff; border: 1px solid #ababab; }
.source .bar i { height: 150px; }

/* Annotations */
.mark-box { position: absolute; left: 557px; right: 0; top: 158px; height: 62px; border: 3px solid #fb3636; border-right-width: 2px; }
.mark-text { position: absolute; left: 886px; top: 120px; margin: 0; font: 16px/22px "Noto Sans", "Noto Sans CJK SC", sans-serif; color: #fb3636; white-space: nowrap; }
.mark-arrow { position: absolute; left: 676px; top: 221px; }

.ime { position: absolute; right: 1px; top: 553px; width: 155px; height: 26px; display: flex; align-items: center; background: #fff; border: 1px solid #a9b9dc; padding: 0 2px; }
.ime button { flex: 1; }
.zh { color: #2e75f6; font: 700 16px/20px "Noto Sans CJK SC", sans-serif; }

.taskbar { position: absolute; left: 0; right: 0; bottom: 0; height: 6px; display: flex; align-items: flex-end; padding-left: 183px; background: #2e3e46; }
.taskbar i { height: 3px; flex: none; }
.t-light { width: 144px; background: #ececec; }
.t-blue { width: 56px; background: #2a85f0; }
.t-gap { width: 152px; }
.taskbar .t-grey { width: 48px; height: 6px; background: #5b656b; }
.taskbar .t-dark { flex: 1; height: 6px; background: #404040; }
</style>
